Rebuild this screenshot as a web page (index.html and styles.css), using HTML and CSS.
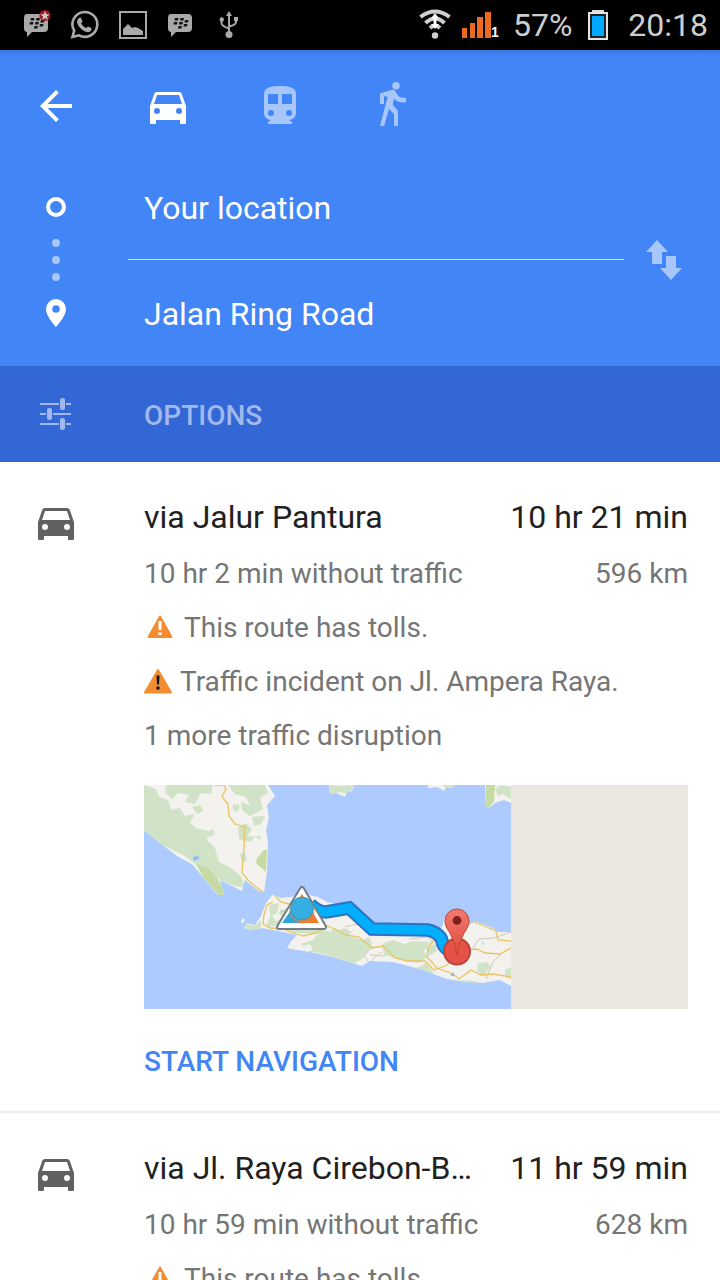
FILE: index.html
```html
<!DOCTYPE html>
<html lang="en">
<head>
<meta charset="utf-8">
<meta name="viewport" content="width=device-width, initial-scale=1">
<title>Directions</title>
<link rel="stylesheet" href="styles.css">
</head>
<body>
<svg class="defs" aria-hidden="true">
  <symbol id="car" viewBox="0 0 24 24"><path fill-rule="evenodd" d="M18.900 6c-.2-.6-.8-1-1.400-1h-11c-.7 0-1.200.4-1.400 1L3 12v8.200c0 .5.300.8.800.8h1.400c.5 0 .8-.3.800-.8V19h12v1.200c0 .5.300.8.800.8h1.400c.5 0 .8-.3.800-.8V12zM6.500 16a1.500 1.500 0 1 1 0-3 1.500 1.500 0 0 1 0 3zm11 0a1.500 1.500 0 1 1 0-3 1.500 1.500 0 0 1 0 3zM5 11l1.500-4.500h11L19 11z"/></symbol>
  <symbol id="bbm" viewBox="0 0 26 26"><path fill="#a9a9a9" d="M4 2h17q4 0 4 4v10q0 4-4 4H9l-5 5v-5q-3 0-3-4V6q0-4 3-4z"/><path d="M8 6h3.500l-.6 2.500H7.400zm5.500 0H17l-.6 2.500h-3.500zM7 10h3.500l-.6 2.500H6.400zm5.500 0H16l-.6 2.500h-3.500zm5.500-2h3.500l-.6 2.500h-3.500zm-6.500 6H15l-.6 2.500h-3.500zm5.500-2h3.500l-.6 2.500h-3.500z" fill="#111"/></symbol>
</svg>
<div class="app">
  <div class="status">
    <div class="notices">
      <svg width="30" height="30" viewBox="0 0 30 30"><use href="#bbm" y="2" width="26" height="26"/><circle cx="22" cy="5.500" r="5.500" fill="#a31b20"/><path d="M22 1l1.200 3.300 3.500.1-2.800 2.100 1 3.400-2.900-2-2.900 2 1-3.400-2.800-2.100 3.500-.1z" fill="#ccc"/></svg>
      <svg width="30" height="30" viewBox="0 0 30 30"><path d="M3.500 27l1.700-6.300A12.400 12.400 0 1 1 10 25.300z" fill="none" stroke="#a9a9a9" stroke-width="2.600"/><path d="M10 8q1-1 2 0l1.500 3.500-1.300 2q1.800 3.500 5 4.600l1.800-1.700 3.400 1.700q.8 3.500-3.400 4.200C13 21.500 8 15.500 8 11.500Q8.500 9 10 8z" fill="#a9a9a9"/></svg>
      <svg width="28" height="28" viewBox="0 0 28 28"><path d="M1 1h26v26H1z" fill="none" stroke="#a9a9a9" stroke-width="2"/><path d="M4 24v-6l5-5 4 4 3-1 3 1 5 3v4z" fill="#a9a9a9"/></svg>
      <svg width="26" height="26" viewBox="0 0 26 26"><use href="#bbm" width="26" height="26"/></svg>
      <svg class="usb" width="20" height="28" viewBox="0 0 20 28"><path d="M10 22V4M2.500 8v4q0 3 7.500 5.500M17 8v3q0 3-7 4.500" fill="none" stroke="#a9a9a9" stroke-width="2"/><path d="M10 0l3 5H7zM15 6h4v4h-4z" fill="#a9a9a9"/><circle cx="2.800" cy="8.500" r="2.200" fill="#a9a9a9"/><circle cx="10" cy="23.500" r="3.500" fill="#a9a9a9"/></svg>
    </div>
    <div class="system">
      <svg width="32" height="32" viewBox="0 0 32 32"><path d="M1.500 8Q16-3 30.500 8M6.500 14Q16 5 25.500 14M11 19Q16 14 21 19" fill="none" stroke="#cfcfcf" stroke-width="4"/><path d="M16 4l4 5.500h-8zM16 20l4-5h-8z" fill="#fff"/><path d="M16 8v8" stroke="#fff" stroke-width="3"/><circle cx="16" cy="26.500" r="3.200" fill="#cfcfcf"/></svg>
      <div class="signal">
        <svg width="29" height="28" viewBox="0 0 29 28"><path d="M0 17h5v10H0zM8 12h5v15H8zM15 6h6v21h-6zM23 1h6v26h-6z" fill="#eb6a1b"/></svg>
        <span class="sim">1</span>
      </div>
      <span class="percent">57%</span>
      <svg class="battery" width="20" height="30" viewBox="0 0 20 30"><path d="M4 0h12v2H4z" fill="#ddd"/><path d="M1 3h18v26H1z" fill="#222" stroke="#e4e4e4" stroke-width="2"/><path d="M4 6h12v20H4z" fill="#00a9ff"/></svg>
      <time>20:18</time>
    </div>
  </div>

  <header class="header">
    <nav class="modes">
      <button class="icon-btn" aria-label="Back"><svg viewBox="0 0 24 24"><path d="M20 11H7.800l5.600-5.600L12 4l-8 8 8 8 1.400-1.400L7.800 13H20z"/></svg></button>
      <button class="icon-btn" aria-label="Drive"><svg><use href="#car"/></svg></button>
      <button class="icon-btn faded" aria-label="Transit"><svg viewBox="0 0 24 24"><path fill-rule="evenodd" d="M12 2C8 2 4 2.500 4 6v9.500C4 17.400 5.600 19 7.500 19L6 20v1h12v-1l-1.500-1c1.900 0 3.500-1.600 3.500-3.500V6c0-3.500-4-4-8-4zM7.500 17a1.500 1.500 0 1 1 0-3 1.500 1.500 0 0 1 0 3zM11 11H6V6h5zm5.500 6a1.500 1.500 0 1 1 0-3 1.500 1.500 0 0 1 0 3zM18 11h-5V6h5z"/></svg></button>
      <button class="icon-btn faded" aria-label="Walk"><svg viewBox="0 0 24 24"><path d="M14 3.800a1.900 1.900 0 1 0 0-3.800 1.900 1.900 0 0 0 0 3.800zM9.800 7.500L6 22h2.100l2.400-8.500 2.500 2.500v6h2v-7.500l-2.600-3.300.6-3c1.300 1.500 2.600 2 6 2V8c-2.500 0-3.500-.4-4.300-1.700l-1-1.600c-.5-.8-1.300-.9-2-.7L6 5.700V11h2V7z"/></svg></button>
    </nav>
    <div class="trip">
      <svg class="trail" width="20" height="130" viewBox="0 0 20 130" aria-hidden="true"><circle cx="10" cy="10" r="8" fill="none" stroke="#fff" stroke-width="4"/><g fill="#a7c6fb"><circle cx="10" cy="46" r="4"/><circle cx="10" cy="63" r="4"/><circle cx="10" cy="80" r="4"/></g><path fill="#fff" fill-rule="evenodd" d="M10 102a10 10 0 0 0-10 10c0 7.500 10 18 10 18s10-10.500 10-18a10 10 0 0 0-10-10zm0 13.800a3.800 3.800 0 1 1 0-7.600 3.800 3.800 0 0 1 0 7.600z"/></svg>
      <div class="fields">
        <input type="text" aria-label="Start" value="Your location">
        <input type="text" aria-label="Destination" value="Jalan Ring Road">
      </div>
      <button class="swap" aria-label="Swap start and destination"><svg width="36" height="40" viewBox="0 0 36 40"><path d="M11 0l11 12h-6v12H6V12H0zM20 16h10v12h6L25 40 14 28h6z"/></svg></button>
    </div>
  </header>
  <button class="options">
    <svg width="32" height="34" viewBox="0 0 32 34" aria-hidden="true"><path d="M0 5h19v2H0zM26 5h5v2h-5zM0 15h6v2H0zM13 15h18v2H13zM0 25h19v2H0zM26 25h5v2h-5z"/><rect x="20" width="5" height="12" rx="2"/><rect x="7" y="10" width="5" height="12" rx="2"/><rect x="20" y="20" width="5" height="12" rx="2"/></svg>
    <span>OPTIONS</span>
  </button>

  <main class="results">
    <article class="route">
      <svg class="route-icon"><use href="#car"/></svg>
      <div class="route-body">
        <div class="line title"><h2>via Jalur Pantura</h2><span>10 hr 21 min</span></div>
        <div class="line"><span>10 hr 2 min without traffic</span><span>596 km</span></div>
        <div class="line note"><svg width="32" height="30" viewBox="0 0 32 30"><path d="M16 3.500L27.500 24h-23z" fill="#f28e31" stroke="#f28e31" stroke-width="2" stroke-linejoin="round"/><path d="M14.500 8h3v9h-3zM14.500 19.500h3v2.500h-3z" fill="#fff"/></svg><span>This route has tolls.</span></div>
        <div class="line note"><svg width="28" height="32" viewBox="0 0 28 32"><path d="M14 4L27 26.500H1z" fill="#f28e31" stroke="#f28e31" stroke-width="2" stroke-linejoin="round"/><path d="M12.500 9.500h3l-.5 9h-2zM12.500 20.500h3v3h-3z" fill="#111"/></svg><span>Traffic incident on Jl. Ampera Raya.</span></div>
        <div class="line">1 more traffic disruption</div>
        <svg class="map" viewBox="0 0 544 224" role="img" aria-label="Route map">
          <defs>
            <clipPath id="tile"><path d="M0 0h367v224H0z"/></clipPath>
            <clipPath id="land"><path id="landshape" d="M0 0h124l7 11-8 9 2 13-3 12 2 13-1 29-3 21-7-3-12-10-3 11-10-5-12-6 4 15h-6l-13-15-12-15-16-9-17-13L0 45zM129 109l7 4 10-1 14-3 14 3 9 5 23 5 25 23 54 2 13-5 3-10 10-3 13 9 9-1 16 6 5 4h13v54l-11-6-17 3-16-1-20-3-27-10-27-7-23-1-8 5-29-9-18-4-28-5 5-8 5-5-24-5-11-2-12 2-6-2 3-5 8 2 6-9 5-13zM97 136l2-3 2 2-3 4zM185 0h25l-2 6-5 1-2 5-9-4-6 1zM284 0h27l-4 3-5-1-2 4-7-4-9 1zM341 0h26v18l-7-3-9 3-6 5-4-2z"/></clipPath>
            <linearGradient id="pin" x2="0" y2="1"><stop stop-color="#f37b6d"/><stop offset="1" stop-color="#dd4b3e"/></linearGradient>
            <linearGradient id="tri"><stop offset=".45" stop-color="#2ba5dc"/><stop offset=".5" stop-color="#f17a2c"/></linearGradient>
          </defs>
          <g clip-path="url(#tile)">
            <path fill="#adcbff" d="M0 0h367v224H0z"/>
            <use href="#landshape" fill="#f3f2ee"/>
            <g clip-path="url(#land)">
              <g fill="#d0e3c6">
                <path d="M0 0l12 4 3 8 9 3 3 10 9-2 5 8 10-2-5 9 6 5 13 3-2 9 8 8 4 14 10 5 12 9 4 12-14-3-20-10-28-20-25-12L0 48z"/>
                <path d="M22 0h47l-2 9-10-1-6 11-10-2 4-7-11-2-6 6-7-7zM84 0h37l3 8-8 5 3 11-13 7-8-6-1-8 9 3-4-8-11-3zM89 19l7 1-2 7-5-2zM94 42l8-4 6 6-5 8 8-1-4 6-12-3zM108 32l13-1-4 8-7 2zM62 48l7-4 2 5-6 3zM111 51h6l-1 4zM96 69l5-1 2 7-5 3zM48 22l8-2 3 6-6 3z"/>
                <path d="M125 120l10-2-2 10 11-6 8 4 27 3-6 9 9 2-8 9-25-1-13-8-14 2 4-10zM98 137l12 4 7-6v9l-12 3zM157 159l12-4 9-11 11 4 11-5 8 4-4 4 15 4 7-3 2 9-9 12-9 6-16-6-7-2-16-4-6 2zM238 159l11-4 11 4 8-3 18 1-6 9 3 6-8 6-15-3-20-5zM186 146l5-3 6 4-5 3zM272 183l10-5 8 10-8 1zM282 162l8-2 3 6-8 5zM336 184l8-2-2 6-6 3zM317 195l15 1 7 6-12 2-11-4zM361 185l6-3v12l-6-2zM334 178l9-1 4 5-8 8-6-4zM185 0l12 1 13-1-5 9-10-2-9 2zM298 0h13l-5 5zM351 4l6-4 10 2v12l-8-5-5 2z"/>
              </g>
              <path fill="#f3f2ee" d="M144 163l6-7 6 6-2 7zM160 161l6-2 3 6-7 2zM128 131l6-4 5 6-7 3zM151 134l8-2 4 5-8 2z"/>
              <path fill="#c6dba3" d="M52 79l12 4 9 10 6 10 1 8-5-1-15-16zM119 66l4-2-1 23-10-9 1-5zM342 0h9l-1 16-5 7-4-2z"/>
              <path d="M4 28l8 7-1 5 10 4M17 42l11 9 4-2 6 8M35 54l10 4 4 9 9 2M50 70l15 5 6 9M27 31l7 3 3 8" fill="none" stroke="#c3d6ba" stroke-dasharray="2 3"/>
              <path d="M201 142l13-3 5-6M230 161l-10 9 5 8 12-11M329 163l6-9 15-1 17-6M342 194l7-17 10-10M265 154l19-2 8 10M136 125l10 4 7 9M226 170l15 1" fill="none" stroke="#cbc9bd"/>
              <path d="M71 0h9l2 4-4 8 6 7 1 12 6 8 10 3-1 20-2 26 7 8 8 7 8 5M129 109l8 8 16 4M129 117l-6 3-3 10-1 9 7 4 15 1 5 3 13 4 13-3 11-7 10 4 9 5 13 2 13 11 11-2 12 12 12 3h18l9 9 11-4 12-8M284 163l-1 9 10 11 16 6 6 5 12-9 10 5 12-1 18 3M321 165l12-1 8 4 15 1 11-6M310 149l8-7 12-5 13 5 9 4 2 9 13 1M284 163l8-11 8 1" fill="none" stroke="#e9c360" stroke-width="1.300"/>
              <path fill="#8fb7ff" d="M49 72l5-1 1 3-5 2zM302 148l2 4-2 1zM307 188h3v3h-3zM338 156l2 3-1 1z"/>
            </g>
            <path d="M166 119q8 8 16 8l23-4 23 21 56 1q12 3 14 11 2 10 12 9" fill="none" stroke="#2f72bd" stroke-width="13.500"/>
            <path d="M166 119q8 8 16 8l23-4 23 21 56 1q12 3 14 11 2 10 12 9" fill="none" stroke="#00b0ff" stroke-width="9.500"/>
            <path d="M158 104l22 38h-45z" fill="#fff" stroke="#717d88" stroke-width="6" stroke-linejoin="round"/>
            <path d="M158 104l22 38h-45z" fill="#fff" stroke="#fff" stroke-width="2" stroke-linejoin="round"/>
            <path d="M158 109l17 29h-37z" fill="url(#tri)"/>
            <circle cx="158" cy="126" r="13" fill="#c98b58" opacity=".45"/><circle cx="158" cy="123.500" r="11.300" fill="#37aee2" stroke="#3495c0"/>
            <circle cx="313" cy="166.500" r="13" fill="#e65245" stroke="#b6453c" stroke-width="2"/>
            <path d="M313 170q-1-11-7-22c-3-4-5-8-5-12a12 12 0 0 1 24 0c0 4-2 8-5 12q-6 11-7 22z" fill="url(#pin)" stroke="#bd443a"/>
            <circle cx="313" cy="135.500" r="4.400" fill="#84201b"/>
          </g>
        </svg>
        <button class="start">START NAVIGATION</button>
      </div>
    </article>
    <article class="route">
      <svg class="route-icon"><use href="#car"/></svg>
      <div class="route-body">
        <div class="line title"><h2>via Jl. Raya Cirebon-B…</h2><span>11 hr 59 min</span></div>
        <div class="line"><span>10 hr 59 min without traffic</span><span>628 km</span></div>
        <div class="line note"><svg width="32" height="30" viewBox="0 0 32 30"><path d="M16 3.500L27.500 24h-23z" fill="#f28e31" stroke="#f28e31" stroke-width="2" stroke-linejoin="round"/><path d="M14.500 8h3v9h-3zM14.500 19.500h3v2.500h-3z" fill="#fff"/></svg><span>This route has tolls.</span></div>
      </div>
    </article>
  </main>
</div>
</body>
</html>
```
FILE: styles.css
```css
* { box-sizing: border-box; }

body {
  margin: 0;
  font-family: Roboto, "Noto Sans", sans-serif;
  font-size: 28px;
  color: #757575;
  background: #fff;
}

button, input {
  margin: 0;
  padding: 0;
  border: 0;
  border-radius: 0;
  background: none;
  font: inherit;
  color: inherit;
}

svg { display: block; flex: none; }
.defs { position: absolute; width: 0; height: 0; }

.app { display: flex; flex-direction: column; height: 100vh; }

.status {
  display: flex;
  flex: none;
  justify-content: space-between;
  align-items: center;
  height: 50px;
  padding: 0 12px 0 23px;
  background: #000;
  color: #cfcfcf;
  font-size: 32px;
}
.notices { display: flex; align-items: center; gap: 20px; }
.notices svg:first-child { margin-right: -4px; }
.notices .usb { margin-left: 6px; }
.system { display: flex; align-items: center; }
.signal { display: flex; align-items: flex-end; margin: 0 14px 0 11px; }
.sim { font: bold 14px/14px "Liberation Sans", sans-serif; color: #fff; }
.battery { margin: 0 20px 0 16px; }

.header {
  flex: none;
  padding-top: 32px;
  background: linear-gradient(#3b77db, #4285f6 6px);
  color: #fff;
}
.modes { display: flex; gap: 64px; padding: 0 32px 24px; }
.icon-btn svg { width: 48px; height: 48px; fill: #fff; }
.faded svg { fill: #a7c6fb; }

.trip { display: flex; align-items: center; }
.trail { margin: 4px 62px 0 46px; }
.fields { display: flex; flex: 1; flex-direction: column; min-width: 0; }
.fields input { width: 100%; height: 106px; padding: 2px 16px 0; font-size: 32px; }
.fields input:first-child { border-bottom: 1px solid #d4e3fd; }
.swap { padding: 20px 38px 20px 22px; }
.swap svg { fill: #a7c6fb; }

.options {
  display: flex;
  flex: none;
  align-items: center;
  gap: 72px;
  height: 96px;
  padding: 2px 40px 0;
  background: #3367d6;
  color: #a0b8ec;
  font-weight: 500;
}
.options svg { fill: #a0b8ec; }

.results { flex: 1; min-height: 0; overflow-y: auto; scrollbar-width: none; }
.route { display: flex; gap: 64px; padding: 25px 32px 0; border-bottom: 2px solid #eee; }
.route-icon { width: 48px; height: 48px; margin-top: 11px; fill: #616161; }
.route-body { flex: 1; min-width: 0; }
.line { display: flex; justify-content: space-between; line-height: 54px; }
.title { font-size: 32px; line-height: 60px; color: #212121; }
.title h2 { margin: 0; font: inherit; }
.note { justify-content: flex-start; align-items: center; gap: 8px; }
.map { width: 100%; margin-top: 22px; background: #ebe8e1; }
.start { height: 102px; padding-top: 2px; color: #4285f4; font-weight: 500; }
```
